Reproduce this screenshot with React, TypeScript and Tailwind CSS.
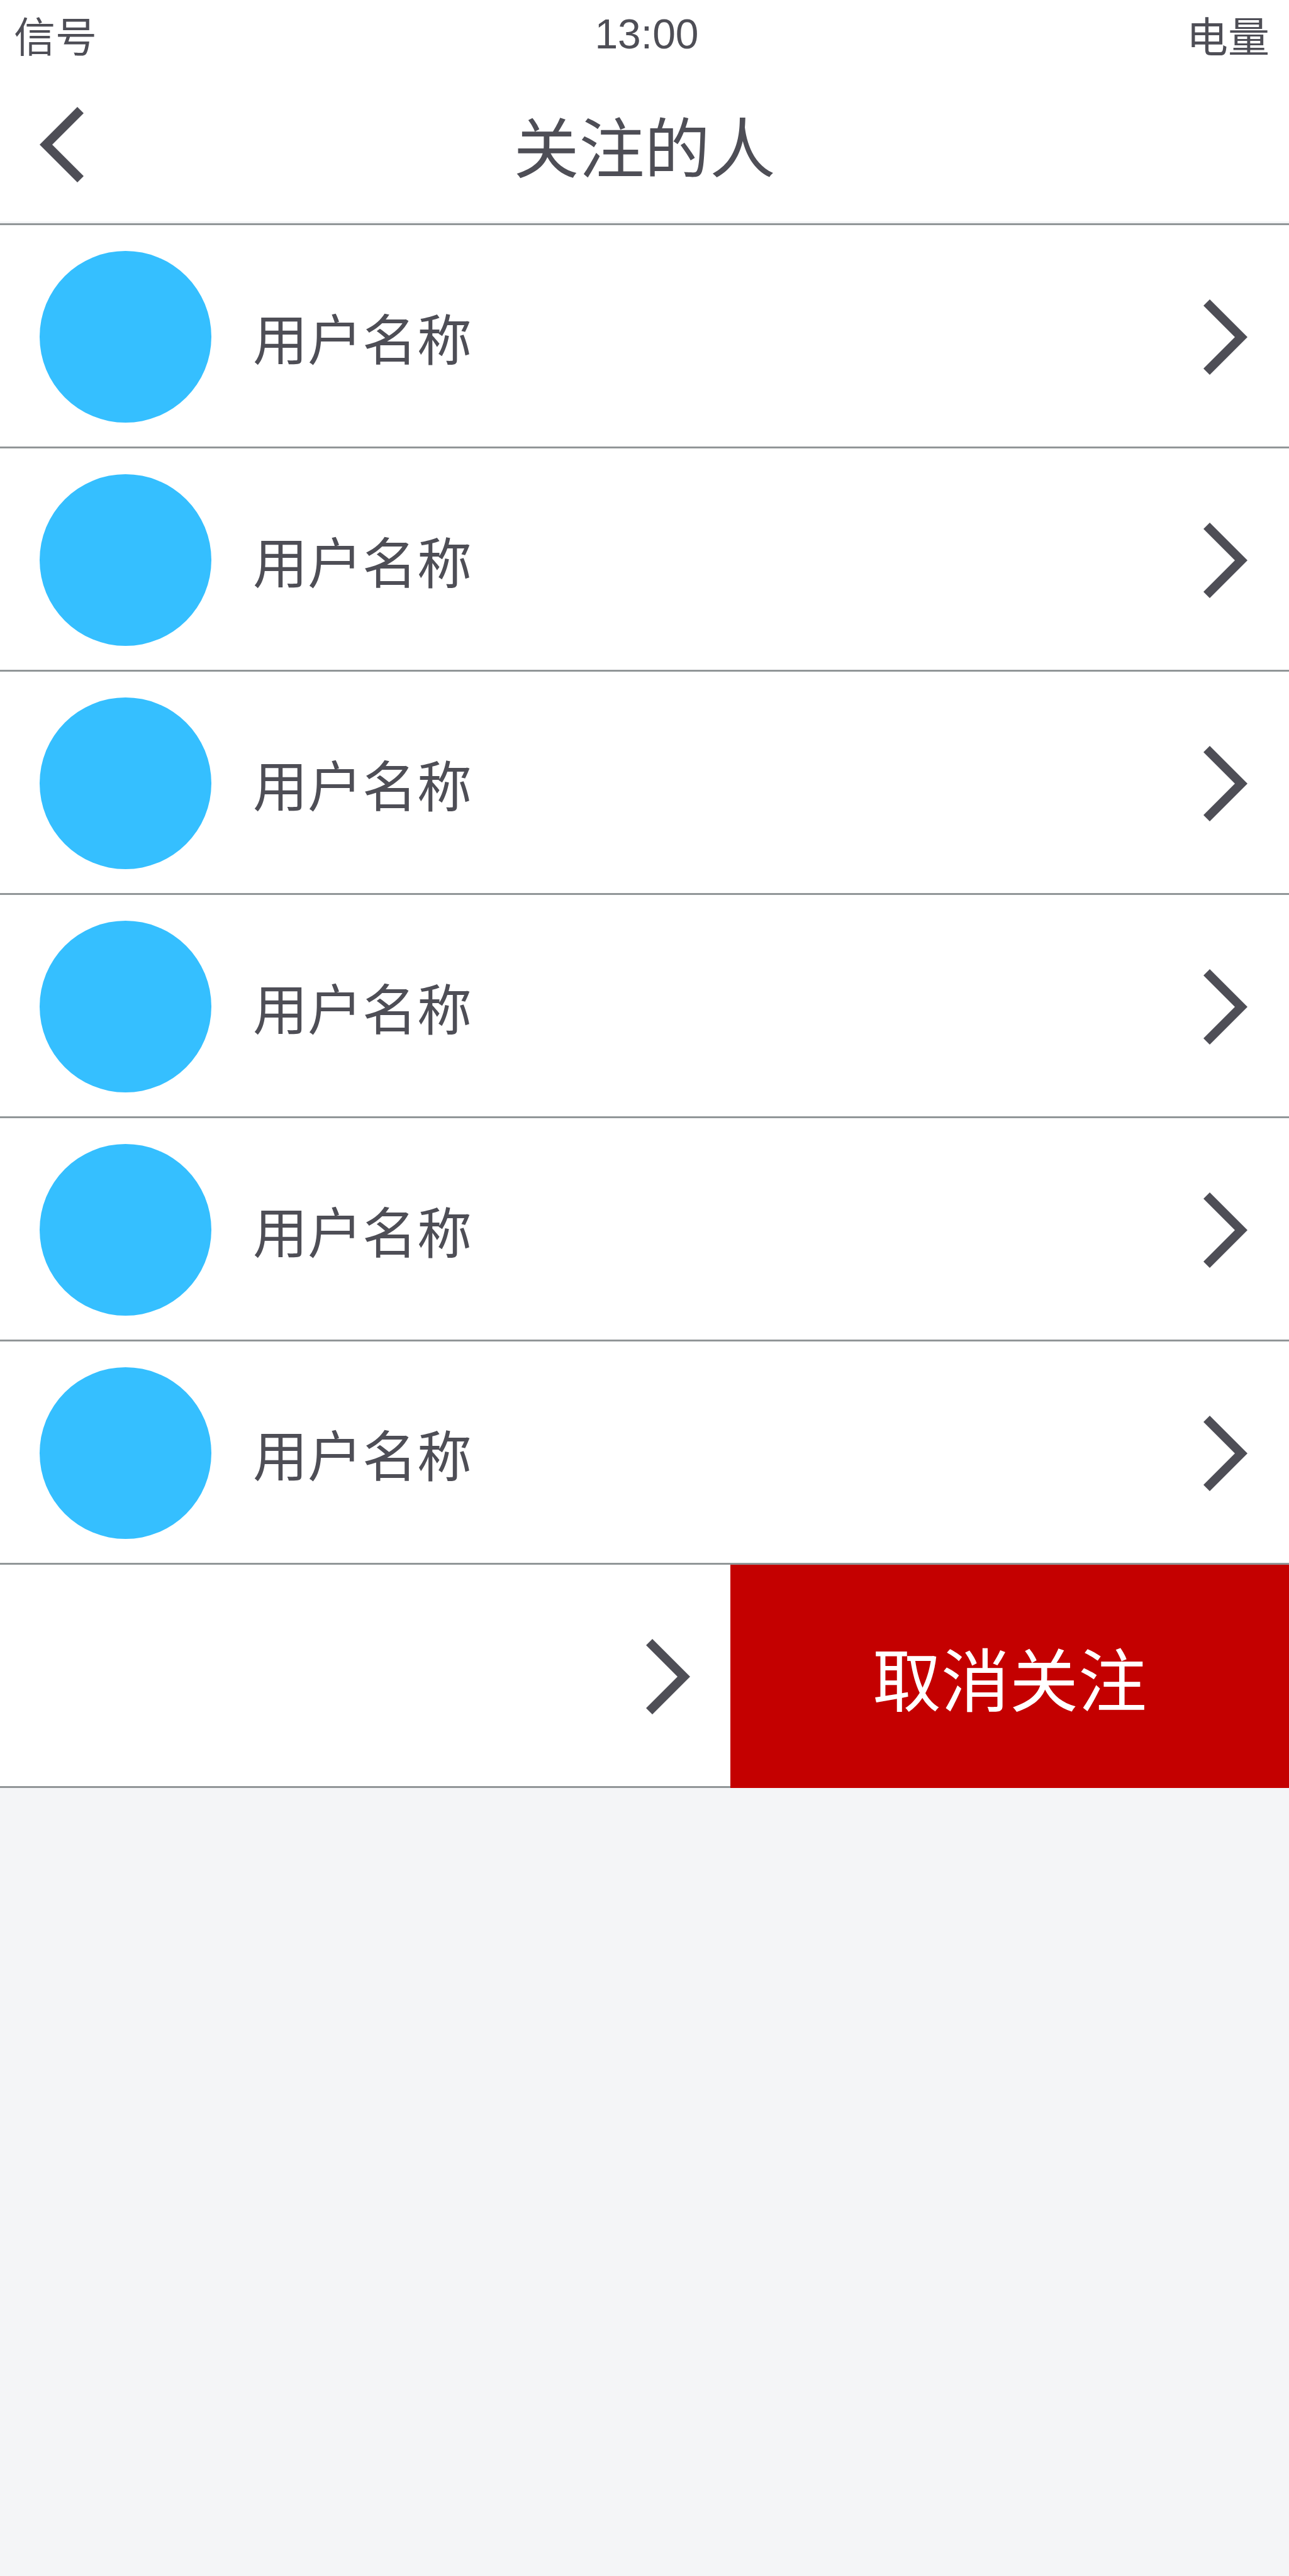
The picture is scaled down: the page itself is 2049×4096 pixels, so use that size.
import React from "react";

const users = [1, 2, 3, 4, 5, 6].map((id) => ({ id, name: "用户名称" }));

function Chevron({ className = "" }: { className?: string }) {
  return (
    <svg
      viewBox="0 0 77 132"
      className={`h-[120px] w-[70px] shrink-0 ${className}`}
      fill="currentColor"
      aria-hidden="true"
    >
      <path d="M11 0 77 66 11 132 0 121 55 66 0 11Z" />
    </svg>
  );
}

function StatusBar() {
  return (
    <div className="grid h-[107px] grid-cols-[1fr_auto_1fr] items-center pr-[15px] pl-[22px] text-[66px] leading-none">
      <span>信号</span>
      <span className="font-['Liberation_Sans',sans-serif]">13:00</span>
      <span className="pr-4 text-right">电量</span>
    </div>
  );
}

function Header() {
  return (
    <header className="border-b-3 border-[#919698] bg-[#f4f5f7] pb-[3px]">
      <div className="bg-white">
        <StatusBar />
        <div className="grid h-[245px] grid-cols-[1fr_auto_1fr] items-center px-[63px]">
          <button type="button" aria-label="返回" className="w-fit">
            <Chevron className="rotate-180" />
          </button>
          <h1 className="text-[104px] leading-normal">关注的人</h1>
        </div>
      </div>
    </header>
  );
}

function UserRow({ name }: { name: string }) {
  return (
    <li>
      <a
        href="#user"
        className="flex h-[355px] items-center border-b-3 border-[#919698] bg-white pt-[3px] pr-[66px] pl-[63px]"
      >
        <span className="size-[273px] shrink-0 rounded-full bg-[#35bfff]" />
        <span className="ml-[66px] flex-1 text-[87px] leading-normal">{name}</span>
        <Chevron />
      </a>
    </li>
  );
}

function SwipedRow() {
  return (
    <li className="flex h-[355px]">
      <a
        href="#user"
        aria-label="用户名称"
        className="flex flex-1 items-center justify-end border-b-3 border-[#919698] bg-white pt-[3px] pr-16"
      >
        <Chevron />
      </a>
      <button
        type="button"
        className="w-[888px] shrink-0 bg-[#c40000] text-[109px] leading-normal text-white"
      >
        取消关注
      </button>
    </li>
  );
}

export default function App() {
  return (
    <div
      lang="zh-CN"
      className="min-h-screen bg-[#f4f5f7] font-['Noto_Sans_CJK_SC',sans-serif] text-[#4e4e56]"
    >
      <Header />
      <main>
        <ul>
          {users.map((user) => (
            <UserRow key={user.id} name={user.name} />
          ))}
          <SwipedRow />
        </ul>
      </main>
    </div>
  );
}
